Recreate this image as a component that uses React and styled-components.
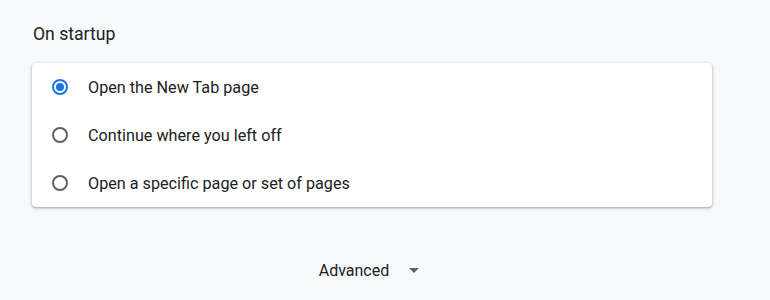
import { useState } from "react";
import styled, { createGlobalStyle } from "styled-components";

const GlobalStyle = createGlobalStyle`
  html, body {
    margin: 0;
    padding: 0;
    background: #f8f9fa;
    font-family: Roboto, "Liberation Sans", sans-serif;
    color: #202124;
  }
`;

const Page = styled.div`
  width: 770px;
  height: 300px;
  padding: 0 32px;
  box-sizing: border-box;
  display: flex;
  flex-direction: column;
`;

const SectionTitle = styled.div`
  font-size: 17.6px;
  line-height: 20px;
  padding-top: 24px;
  height: 63px;
  box-sizing: border-box;
  margin-left: 1px;
`;

const Card = styled.div`
  width: 680px;
  background: white;
  border-radius: 4px;
  box-shadow: 0 1px 2px rgba(60, 64, 67, 0.3), 0 1px 3px 1px rgba(60, 64, 67, 0.15);
`;

const Row = styled.label`
  display: flex;
  align-items: center;
  height: 48px;
  padding-left: 20px;
  cursor: pointer;
  font-size: 16.2px;
`;

const Radio = styled.span`
  width: 16px;
  height: 16px;
  box-sizing: border-box;
  border-radius: 50%;
  border: 2px solid ${(p) => (p.checked ? "#1a73e8" : "#5f6368")};
  display: flex;
  align-items: center;
  justify-content: center;
  flex-shrink: 0;

  &::after {
    content: "";
    width: 8px;
    height: 8px;
    border-radius: 50%;
    background: ${(p) => (p.checked ? "#1a73e8" : "transparent")};
  }
`;

const RadioWrap = styled.span`
  width: 36px;
  display: flex;
  align-items: center;
`;

const Footer = styled.div`
  width: 680px;
  display: flex;
  justify-content: center;
  align-items: center;
  margin-top: 48px;
  height: 30px;
`;

const AdvancedButton = styled.button`
  display: flex;
  align-items: center;
  border: none;
  background: none;
  font-family: inherit;
  font-size: 16px;
  color: #202124;
  padding: 0;
  margin-right: 6px;
  cursor: pointer;
`;

const Arrow = styled.span`
  width: 0;
  height: 0;
  margin-left: 20px;
  border-left: 5px solid transparent;
  border-right: 5px solid transparent;
  border-top: 5px solid #5f6368;
`;

const options = [
  "Open the New Tab page",
  "Continue where you left off",
  "Open a specific page or set of pages",
];

const App = () => {
  const [selected, setSelected] = useState(0);
  return (
    <>
      <GlobalStyle />
      <Page>
        <SectionTitle>On startup</SectionTitle>
        <Card>
          {options.map((text, id) => (
            <Row key={id} onClick={() => setSelected(id)}>
              <RadioWrap>
                <Radio checked={selected === id} />
              </RadioWrap>
              {text}
            </Row>
          ))}
        </Card>
        <Footer>
          <AdvancedButton>
            Advanced
            <Arrow />
          </AdvancedButton>
        </Footer>
      </Page>
    </>
  );
};
export default App;
